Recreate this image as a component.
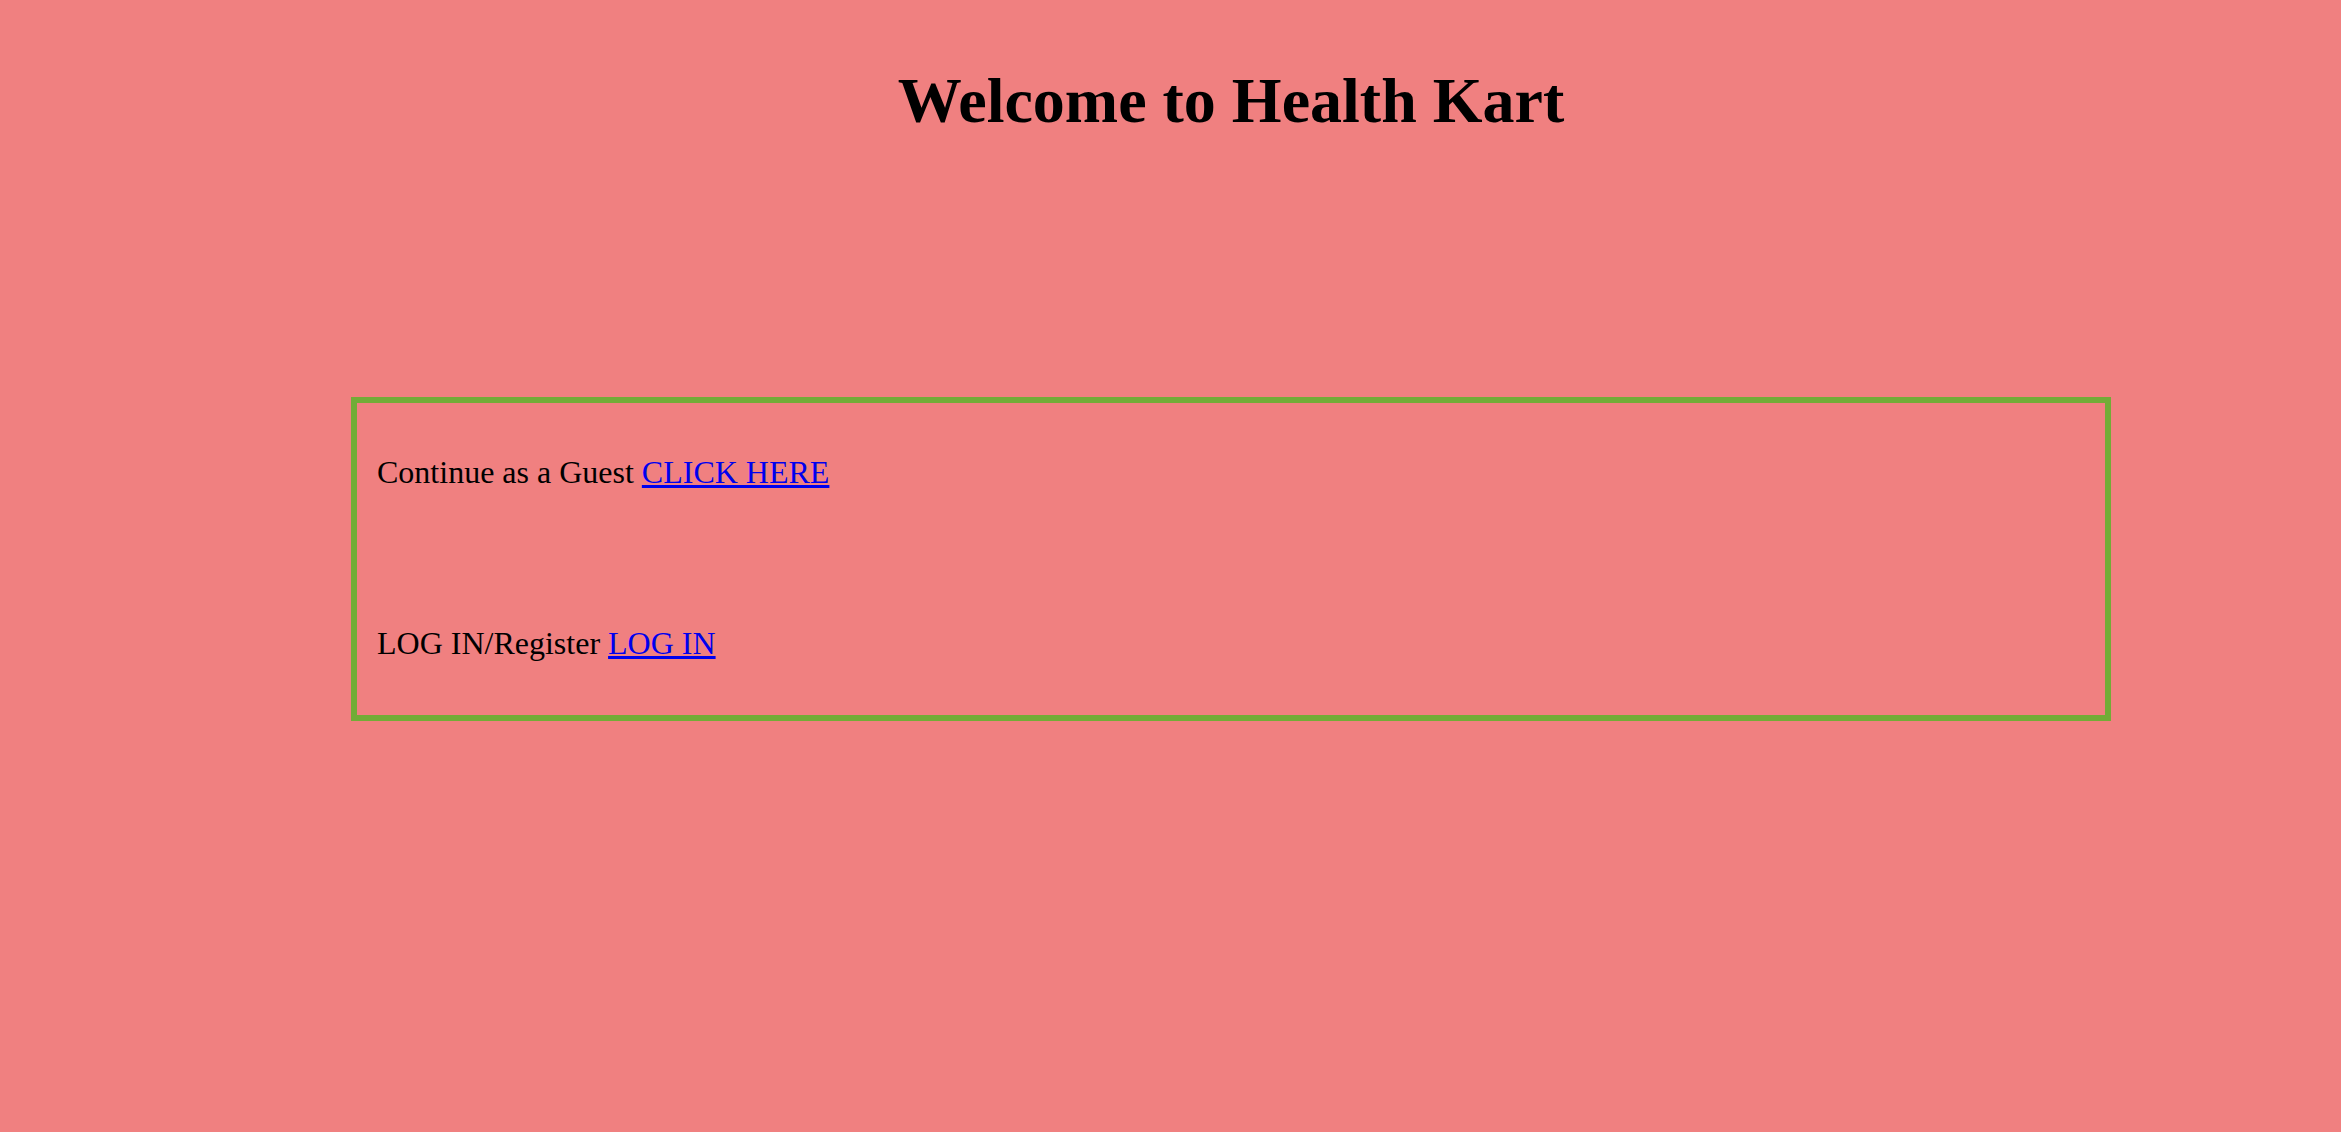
export default function App() {
  return (
    <div className="min-h-[1132px] w-full bg-[#f08080] font-['Liberation_Serif','Times_New_Roman',serif] text-black">
      <div className="ml-[351px] w-[1760px]">
        <h1 className="pt-[65px] text-center text-[64px] font-bold leading-[71px]">Welcome to Health Kart</h1>

        {/* Options box */}
        <div className="mt-[261px] border-[6px] border-[#72ac37] pl-[20px] pt-[52px] pb-[54px] text-[32px] leading-[35px]">
          <p>
            Continue as a Guest{" "}
            <a href="#" className="text-[#0000ee] underline">
              CLICK HERE
            </a>
          </p>
          <p className="mt-[136px]">
            LOG IN/Register{" "}
            <a href="#" className="text-[#0000ee] underline">
              LOG IN
            </a>
          </p>
        </div>
      </div>
    </div>
  );
}
